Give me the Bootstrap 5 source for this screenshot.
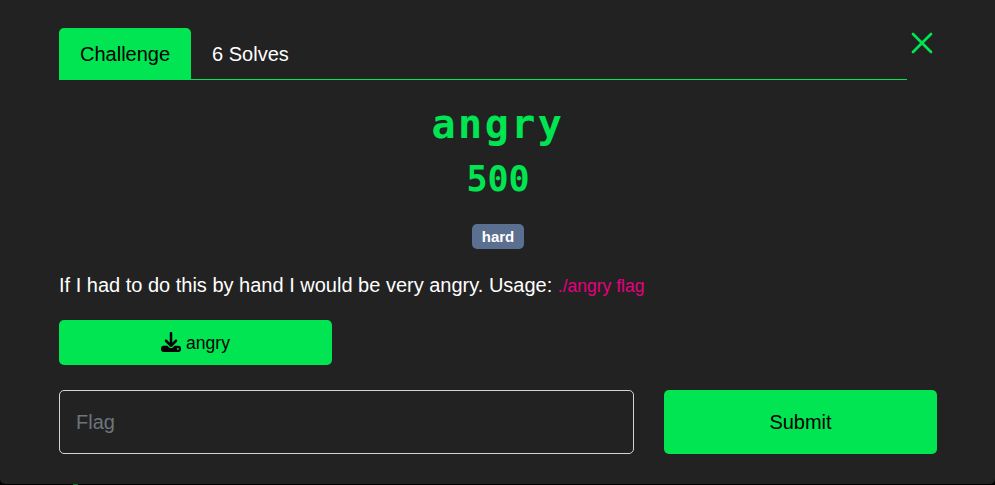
<!DOCTYPE html>
<html lang="en">
<head>
<meta charset="utf-8">
<title>angry</title>
<link href="https://cdn.jsdelivr.net/npm/bootstrap@5.3.0/dist/css/bootstrap.min.css" rel="stylesheet">
<style>
html{font-size:20px}
body{background:#000;color:#fff;font-family:"Liberation Sans",Arial,sans-serif;font-size:20px;line-height:30px;height:485px;overflow:hidden}
.panel{height:484px;background:#222;border-radius:0 0 5px 5px;padding:28px 58px 0 59px}
.tabs{width:848px;height:52px;border-bottom:1px solid #00e551}
.tabs .nav-link{height:52px;padding:11px 21px 10px;border:0;border-radius:5px 5px 0 0;color:#fff}
.tabs .nav-link.active{background:#00e551;color:#000}
.closer{width:22px;height:22px;margin:4px 0 0 4px;padding:0;border:0;background:none;line-height:0}
.mono{font-family:"DejaVu Sans Mono",monospace;font-weight:700;color:#00e551;margin:0}
.title{font-size:40px;line-height:48px;letter-spacing:2.5px;margin-top:20px}
.points{font-size:35px;line-height:42px;margin-top:10px}
.tag{background:#5b7090;font-size:15px;line-height:15px;padding:5px 10px;border-radius:5px;margin-top:24px;height:25px}
.desc{margin:21px 0 19px}
.desc code{font-family:inherit;font-size:17.5px;color:#e6007f}
.green{background:#00e551;color:#000;border:0;border-radius:5px;width:273px}
.green:hover{background:#00c947;color:#000}
.file{height:45px;font-size:17.5px;padding:0}
.file span{padding-top:1px}
.file svg{margin:0 5px 2px 0}
.entry{margin-top:25px;gap:30px}
.flag{width:575px;height:64px;background:transparent!important;border:1px solid #d4d4d4;border-radius:5px;padding:0 16px;color:#fff;font-size:20px}
.flag::placeholder{color:#6c757d}
.send{height:64px;font-size:20px}
.peek{width:5px;height:1px;background:#087433;margin-left:73px}
</style>
</head>
<body>
<main class="panel">
  <div class="d-flex align-items-start">
    <ul class="nav tabs flex-nowrap">
      <li class="nav-item"><a class="nav-link active" href="#">Challenge</a></li>
      <li class="nav-item"><a class="nav-link" href="#">6 Solves</a></li>
    </ul>
    <button class="closer" aria-label="Close"><svg width="22" height="22" viewBox="0 0 22 22" fill="none" stroke="#00e551" stroke-width="2.7" stroke-linecap="round"><path d="M2 2l18 18M20 2L2 20"/></svg></button>
  </div>
  <div class="d-flex flex-column align-items-center">
    <h2 class="mono title">angry</h2>
    <h3 class="mono points">500</h3>
    <span class="badge tag">hard</span>
  </div>
  <p class="desc">If I had to do this by hand I would be very angry. Usage: <code>./angry flag</code></p>
  <a class="btn green file d-flex align-items-center justify-content-center" href="#">
    <svg width="20" height="20" viewBox="0 0 512 512" fill="#000"><path d="M288 32c0-17.700-14.300-32-32-32s-32 14.300-32 32v242.700l-73.400-73.400c-12.500-12.500-32.800-12.500-45.300 0s-12.500 32.800 0 45.300l128 128c12.500 12.500 32.800 12.500 45.300 0l128-128c12.500-12.500 12.500-32.800 0-45.300s-32.800-12.500-45.300 0L288 274.700V32zM64 352c-35.300 0-64 28.700-64 64v32c0 35.300 28.700 64 64 64h384c35.300 0 64-28.700 64-64v-32c0-35.300-28.700-64-64-64H346.500l-45.300 45.300c-25 25-65.500 25-90.500 0L165.500 352H64zm368 56a24 24 0 1 1 0 48 24 24 0 1 1 0-48z"/></svg><span>angry</span>
  </a>
  <form class="d-flex entry">
    <input class="form-control flag" type="text" placeholder="Flag" aria-label="Flag">
    <button class="btn green send" type="button">Submit</button>
  </form>
</main>
<div class="peek"></div>
<script src="https://cdn.jsdelivr.net/npm/bootstrap@5.3.0/dist/js/bootstrap.bundle.min.js"></script>
</body>
</html>
